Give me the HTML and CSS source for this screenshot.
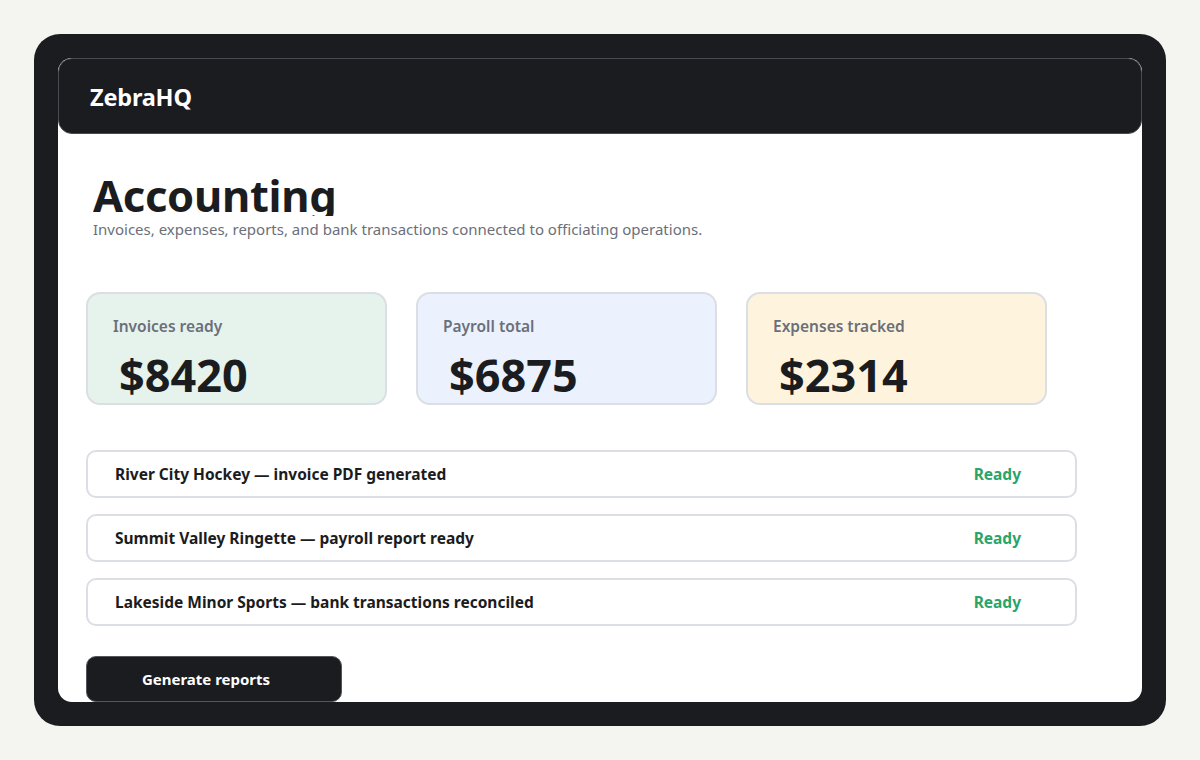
FILE: index.html
```html
<!DOCTYPE html>
<html lang="en">
<head>
<meta charset="utf-8">
<title>ZebraHQ — Accounting</title>
<link rel="stylesheet" href="styles.css">
</head>
<body>
<div class="frame">
  <div class="screen">
    <header class="topbar">
      <span class="brand">ZebraHQ</span>
    </header>
    <main class="content">
      <div class="title-block">
        <h1 class="title">Accounting</h1>
        <p class="subtitle">Invoices, expenses, reports, and bank transactions connected to officiating operations.</p>
      </div>
      <div class="stats">
        <div class="stat stat-green">
          <div class="stat-label">Invoices ready</div>
          <div class="stat-value">$8420</div>
        </div>
        <div class="stat stat-blue">
          <div class="stat-label">Payroll total</div>
          <div class="stat-value">$6875</div>
        </div>
        <div class="stat stat-yellow">
          <div class="stat-label">Expenses tracked</div>
          <div class="stat-value">$2314</div>
        </div>
      </div>
      <div class="rows">
        <div class="row"><span class="row-text">River City Hockey — invoice PDF generated</span><span class="status">Ready</span></div>
        <div class="row"><span class="row-text">Summit Valley Ringette — payroll report ready</span><span class="status">Ready</span></div>
        <div class="row"><span class="row-text">Lakeside Minor Sports — bank transactions reconciled</span><span class="status">Ready</span></div>
      </div>
      <button class="primary">Generate reports</button>
    </main>
  </div>
</div>
</body>
</html>
```

FILE: styles.css
```css
* { box-sizing: border-box; }
html, body { margin: 0; padding: 0; }
body {
  background: #f4f4f0;
  font-family: "Noto Sans", "Open Sans", sans-serif;
  color: #1b1c20;
  width: 1200px;
  height: 760px;
  overflow: hidden;
}
.frame {
  margin: 34px;
  width: 1132px;
  height: 692px;
  background: #1b1c20;
  border-radius: 26px;
  padding: 24px;
}
.screen {
  background: #ffffff;
  border-radius: 14px;
  height: 644px;
  overflow: hidden;
  display: flex;
  flex-direction: column;
}
.topbar {
  height: 76px;
  flex: none;
  background: #1b1c20;
  border: 1px solid #4a4b52;
  border-radius: 14px;
  display: flex;
  align-items: center;
  padding-left: 31px;
}
.brand {
  color: #ffffff;
  font-weight: 700;
  font-size: 23.5px;
  letter-spacing: -0.2px;
  padding-top: 2px;
}
.content {
  padding: 38px 28px 0 28px;
  display: flex;
  flex-direction: column;
  align-items: flex-start;
}
.title-block { padding-left: 7px; }
.title {
  margin: 0;
  font-size: 43.5px;
  font-weight: 700;
  line-height: 46px;
  height: 44px;
  overflow: hidden;
  letter-spacing: -0.3px;
  color: #1b1c20;
}
.subtitle {
  margin: 2px 0 0 0;
  font-size: 15px;
  line-height: 22px;
  color: #6b6f7a;
  font-weight: 400;
}
.stats {
  display: flex;
  gap: 29px;
  margin-top: 52px;
}
.stat {
  width: 301px;
  height: 113px;
  border: 2px solid #dcdee5;
  border-radius: 14px;
  padding: 22px 25px 0 25px;
}
.stat-green { background: #e5f3ec; }
.stat-blue { background: #ebf2fd; }
.stat-yellow { background: #fef4de; }
.stat-label {
  font-size: 15.5px;
  font-weight: 600;
  color: #6b6f7a;
  line-height: 20px;
}
.stat-value {
  margin-top: 14px;
  padding-left: 6px;
  font-size: 45px;
  font-weight: 700;
  line-height: 50px;
  color: #1b1c20;
}
.rows {
  display: flex;
  flex-direction: column;
  gap: 16px;
  margin-top: 45px;
  width: 991px;
}
.row {
  height: 48px;
  border: 2px solid #dcdee5;
  border-radius: 10px;
  display: flex;
  align-items: center;
  justify-content: space-between;
  padding: 0 54px 0 27px;
}
.row-text {
  font-size: 15.5px;
  font-weight: 700;
  color: #1b1c20;
}
.status {
  font-size: 15.5px;
  font-weight: 700;
  color: #2ba468;
}
.primary {
  margin-top: 30px;
  width: 256px;
  height: 46px;
  background: #1b1c20;
  color: #ffffff;
  border: 1px solid #55565c;
  border-radius: 10px;
  font-family: inherit;
  font-size: 15px;
  font-weight: 700;
  padding: 0 16px 0 0;
}
```
